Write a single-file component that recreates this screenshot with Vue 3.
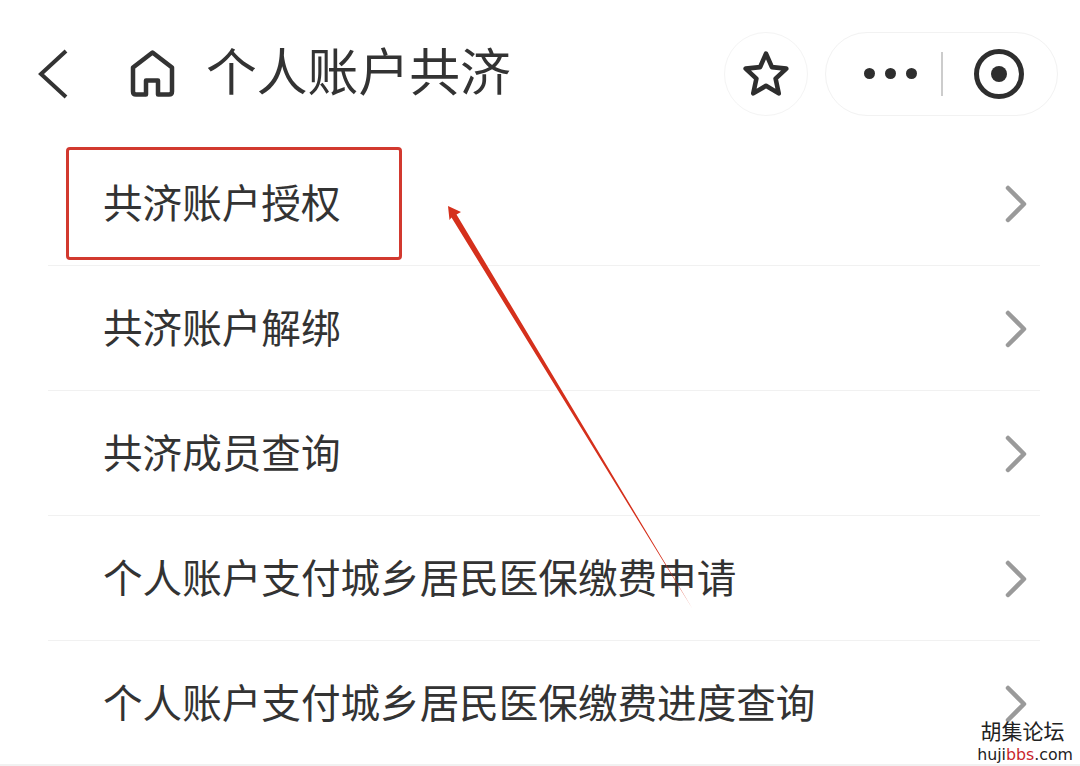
<template>
  <div class="page">
    <header class="nav">
      <svg class="back" width="34" height="56" viewBox="0 0 34 56">
        <path d="M30 5 L5 28 L30 51" />
      </svg>
      <svg class="home" width="52" height="56" viewBox="0 0 52 56">
        <path d="M26.5 6.5 L46 21.5 V45.5 Q46 48.5 43 48.5 H32 V34.5 H20 V48.5 H10 Q7 48.5 7 45.5 V21.5 Z" />
      </svg>
      <h1 class="title">个人账户共济</h1>
      <div class="actions">
        <div class="fav">
          <svg width="48" height="48" viewBox="0 0 52 52">
            <path d="M26 4 L32.4 18.6 L48 20.2 L36.4 31 L39.8 47 L26 38.8 L12.2 47 L15.6 31 L4 20.2 L19.6 18.6 Z" />
          </svg>
        </div>
        <div class="capsule">
          <div class="dots"><i></i><i></i><i></i></div>
          <span class="sep"></span>
          <svg class="record" width="52" height="52" viewBox="0 0 52 52">
            <circle cx="26" cy="26" r="22.5" />
            <circle class="core" cx="26" cy="26" r="8" />
          </svg>
        </div>
      </div>
    </header>

    <ul class="menu">
      <li v-for="item in items" :key="item" class="row">
        <span class="label">{{ item }}</span>
        <svg class="chev" width="24" height="38" viewBox="0 0 24 38">
          <path d="M4 3 L20 19 L4 35" />
        </svg>
      </li>
    </ul>
    <div class="bottom-line"></div>

    <div class="redbox"></div>
    <svg class="arrow" width="1080" height="766" viewBox="0 0 1080 766">
      <path d="M448 206 L461 212 L456.5 214.5 L692 608 L451.5 217.5 L449.5 220 Z" />
    </svg>

    <div class="mark">
      <div class="mark-cn">胡集论坛</div>
      <div class="mark-en">huji<em>bbs</em>.com</div>
    </div>
  </div>
</template>

<script setup>
const items = [
  '共济账户授权',
  '共济账户解绑',
  '共济成员查询',
  '个人账户支付城乡居民医保缴费申请',
  '个人账户支付城乡居民医保缴费进度查询',
]
</script>

<style>
html,
body {
  margin: 0;
  background: #fff;
}
</style>

<style scoped>
.page {
  position: relative;
  width: 1080px;
  height: 766px;
  overflow: hidden;
  background: #fff;
  color: #333;
  font-family: "Noto Sans CJK SC", "Liberation Sans", sans-serif;
}

.nav {
  display: flex;
  align-items: center;
  box-sizing: border-box;
  height: 141px;
  padding: 6px 22px 0 36px;
}

.back path {
  fill: none;
  stroke: #333;
  stroke-width: 4;
}

.home {
  margin-left: 56px;
}

.home path {
  fill: none;
  stroke: #333;
  stroke-width: 4.5;
  stroke-linejoin: round;
}

.title {
  margin: -9px 0 0 28px;
  font-size: 50.8px;
  font-weight: 400;
  line-height: 1.2;
  color: #333;
}

.actions {
  display: flex;
  gap: 17px;
  margin-left: auto;
}

.fav {
  display: flex;
  align-items: center;
  justify-content: center;
  box-sizing: border-box;
  width: 84px;
  height: 84px;
  border: 1.5px solid #f4f4f4;
  border-radius: 50%;
}

.fav path {
  fill: none;
  stroke: #2e2e2e;
  stroke-width: 5;
  stroke-linejoin: round;
}

.capsule {
  display: flex;
  align-items: center;
  box-sizing: border-box;
  width: 233px;
  height: 84px;
  padding-left: 38px;
  border: 1.5px solid #f2f2f2;
  border-radius: 42px;
}

.dots {
  display: flex;
  gap: 10px;
}

.dots i {
  width: 11px;
  height: 11px;
  border-radius: 50%;
  background: #2e2e2e;
}

.sep {
  width: 1.5px;
  height: 44px;
  margin-left: 24px;
  background: #ccc;
}

.record {
  margin-left: 30px;
}

.record circle {
  fill: none;
  stroke: #2e2e2e;
  stroke-width: 5;
}

.record .core {
  fill: #2e2e2e;
  stroke: none;
}

.menu {
  margin: 0 40px 0 48px;
  padding: 0;
  list-style: none;
}

.row {
  display: flex;
  align-items: center;
  justify-content: space-between;
  box-sizing: border-box;
  height: 125px;
  padding: 0 12px 4px 55px;
  border-bottom: 1.5px solid #f1f1f1;
}

.row:last-child {
  height: 123px;
  padding-bottom: 3.5px;
  border-bottom: 0;
}

.label {
  font-size: 39.6px;
  line-height: 1.2;
  color: #333;
}

.chev {
  margin-top: 6px;
}

.chev path {
  fill: none;
  stroke: #9a9a9a;
  stroke-width: 4.5;
  stroke-linecap: round;
  stroke-linejoin: round;
}

.bottom-line {
  height: 2px;
  background: #f1f1f1;
}

.redbox {
  position: absolute;
  left: 66px;
  top: 147px;
  box-sizing: border-box;
  width: 336px;
  height: 113px;
  border: 3px solid #d2392f;
  border-radius: 4px;
}

.arrow {
  position: absolute;
  left: 0;
  top: 0;
  pointer-events: none;
}

.arrow path {
  fill: #d5301c;
}

.mark {
  position: absolute;
  right: 7px;
  bottom: 2px;
  text-align: center;
}

.mark-cn {
  padding-right: 5px;
  font-size: 21px;
  line-height: 31px;
  color: #222;
}

.mark-en {
  font-family: "DejaVu Sans", sans-serif;
  font-size: 15.8px;
  line-height: 18px;
  color: #222;
}

.mark-en em {
  font-style: normal;
  color: #c8252c;
}
</style>
